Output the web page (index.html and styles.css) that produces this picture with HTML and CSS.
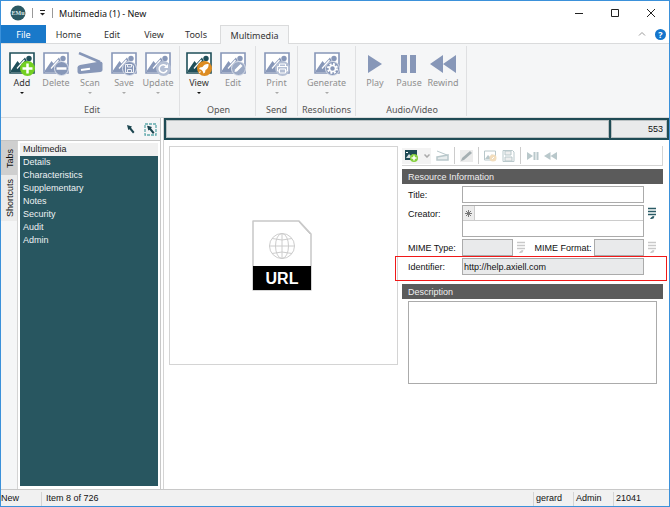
FILE: index.html
```
<!DOCTYPE html>
<html lang="en">
<head>
<meta charset="utf-8">
<title>Multimedia (1) - New</title>
<link rel="stylesheet" href="styles.css">
</head>
<body>
<svg class="defs" aria-hidden="true">
  <defs>
    <symbol id="picture" viewBox="0 0 26 24">
      <path d="M1 1h24v20H1z" fill="#fff" stroke="currentColor" stroke-width="1.600"/>
      <path d="M2 18.500 8.500 9l2 2.500L16 5.500l7 13.500V20H2z" fill="currentColor"/>
      <path d="M8 16.500 15.500 8" stroke="#fff" stroke-width="1.200"/>
      <circle cx="20" cy="6.500" r="2.700" fill="currentColor"/>
    </symbol>
    <symbol id="cursor" viewBox="0 0 8 9">
      <path d="M0 0 5 1.500 4 2.700 7.500 7 6 8.500 2.500 4.200 1.300 5z" fill="#1c4650"/>
    </symbol>
    <symbol id="lookup" viewBox="0 0 10 13">
      <path d="M1 1.500h8M1 4.500h8M1 7.500h8" stroke="currentColor" stroke-width="1.500"/>
      <path d="m3 12 1-1.500L6 9l1.500.5-1 2L4.500 12z" fill="currentColor"/>
    </symbol>
  </defs>
</svg>
<div class="window">
  <header class="titlebar">
    <svg class="logo" viewBox="0 0 16 16"><circle cx="8" cy="8" r="7.500" fill="#2b5963"/><text x="8" y="10" text-anchor="middle" class="logo-text">EMu</text></svg>
    <span class="divider"></span>
    <button class="quick" aria-label="Customize"><svg viewBox="0 0 7 6"><path d="M1 .5h5" stroke="#222"/><path d="M1 3h5L3.500 5.500z" fill="#222"/></svg></button>
    <span class="divider"></span>
    <h1>Multimedia (1) - New</h1>
    <div class="controls">
      <button aria-label="Minimize"><svg viewBox="0 0 10 10"><path d="M1 5.500h8" stroke="#222"/></svg></button>
      <button aria-label="Maximize"><svg viewBox="0 0 10 10"><path d="M1.500 1.500h7v7h-7z" fill="none" stroke="#222"/></svg></button>
      <button aria-label="Close"><svg viewBox="0 0 10 10"><path d="m1 1 8 8M9 1 1 9" stroke="#222"/></svg></button>
    </div>
  </header>
  <nav class="menu">
    <button class="file">File</button>
    <button>Home</button>
    <button>Edit</button>
    <button>View</button>
    <button>Tools</button>
    <button class="current">Multimedia</button>
    <div class="menu-end">
      <svg class="collapse" viewBox="0 0 8 8"><path d="M1 5.500 4 2.500l3 3" fill="none" stroke="#999"/></svg>
      <button class="help" aria-label="Help">?</button>
    </div>
  </nav>
  <section class="ribbon">
    <div class="group first">
      <div class="tools">
        <button class="tool dark"><svg viewBox="0 0 26 24"><use href="#picture"/><circle cx="18.500" cy="16.500" r="7.500" fill="#74d022"/><path d="M18.500 11.500v10M13.500 16.500h10" stroke="#fff" stroke-width="2.500"/></svg><span>Add</span><i class="caret"></i></button>
        <button class="tool"><svg viewBox="0 0 26 24"><use href="#picture"/><circle cx="18.500" cy="16.500" r="7" fill="#8797b8" stroke="#dde2ec"/><path d="M13.500 16.500h10" stroke="#fff" stroke-width="2.500"/></svg><span>Delete</span></button>
        <button class="tool"><svg viewBox="0 0 26 24"><path d="m2 1 21 9" stroke="currentColor" stroke-width="2.500"/><path d="M3 13 23 9.500q2.500 0 2.500 2V18q0 1.500-2 2L3 22Q.5 22 .5 20v-4.500Q.5 13.500 3 13z" fill="currentColor"/><path d="m4 18 9-1.200" stroke="#fff" stroke-width="2"/></svg><span>Scan</span><i class="caret"></i></button>
        <button class="tool"><svg viewBox="0 0 26 24"><use href="#picture"/><circle cx="18.500" cy="16.500" r="7" fill="#8797b8" stroke="#dde2ec"/><path d="M14.500 12.500h6.500l1.500 1.500v6.500h-8zM16.500 12.500V15h4v-2.500M16.500 20.500V17.500h4v3" fill="none" stroke="#eef1f6"/></svg><span>Save</span><i class="caret"></i></button>
        <button class="tool"><svg viewBox="0 0 26 24"><use href="#picture"/><circle cx="18.500" cy="16.500" r="7.500" fill="#b4bfd4"/><path d="M21.500 14.500A4 4 0 1 0 22 18" fill="none" stroke="#fff" stroke-width="1.500"/><path d="M23 12v4h-4z" fill="#fff"/></svg><span>Update</span><i class="caret"></i></button>
      </div>
      <h2>Edit</h2>
    </div>
    <div class="group second">
      <div class="tools">
        <button class="tool dark"><svg viewBox="0 0 26 24"><use href="#picture"/><circle cx="18.500" cy="16.500" r="7.500" fill="#dd8c22"/><path d="M22.500 12q-4-.5-6 3l-2.500.5-1 1.500 2.300.8 1.400 1.500.8 2.200 1.500-1 .5-2.500q3.500-2 3-6zM14 19l-1.500 2.500L15 20z" fill="#fff"/></svg><span>View</span><i class="caret"></i></button>
        <button class="tool"><svg viewBox="0 0 26 24"><use href="#picture"/><circle cx="18.500" cy="16.500" r="7" fill="#9ba9c4" stroke="#dde2ec"/><path d="m14.500 20 .5-2.500 5.500-5.500 2 2-5.500 5.500z" fill="#fff"/></svg><span>Edit</span></button>
      </div>
      <h2>Open</h2>
    </div>
    <div class="group third">
      <div class="tools">
        <button class="tool"><svg viewBox="0 0 26 24"><use href="#picture"/><circle cx="18.500" cy="16.500" r="7.500" fill="#b4bfd4"/><path d="M15.500 14.500V12h6v2.500M15.500 19h-2v-4.500h10V19h-2M15.500 17h6v4h-6z" fill="none" stroke="#fff"/></svg><span>Print</span><i class="caret"></i></button>
      </div>
      <h2>Send</h2>
    </div>
    <div class="group fourth">
      <div class="tools">
        <button class="tool"><svg viewBox="0 0 26 24"><use href="#picture"/><circle cx="18.500" cy="16.500" r="7" fill="#8797b8" stroke="#dde2ec"/><circle cx="18.500" cy="16.500" r="4.500" fill="none" stroke="#fff" stroke-width="2" stroke-dasharray="2 1.530"/><circle cx="18.500" cy="16.500" r="3" fill="none" stroke="#fff" stroke-width="1.500"/></svg><span>Generate</span><i class="caret"></i></button>
      </div>
      <h2>Resolutions</h2>
    </div>
    <div class="group fifth">
      <div class="tools">
        <button class="tool"><svg viewBox="0 0 26 24"><path d="M6 3v18l14-9z" fill="currentColor"/></svg><span>Play</span></button>
        <button class="tool"><svg viewBox="0 0 26 24"><path d="M5 3h6v18H5zM14 3h6v18h-6z" fill="currentColor"/></svg><span>Pause</span></button>
        <button class="tool"><svg viewBox="0 0 26 24"><path d="M13 3v18L0 12zM26 3v18l-13-9z" fill="currentColor"/></svg><span>Rewind</span></button>
      </div>
      <h2>Audio/Video</h2>
    </div>
  </section>
  <main class="workspace">
    <aside class="side">
      <div class="side-tools">
        <button aria-label="Select"><svg class="pointer" viewBox="0 0 8 9"><use href="#cursor"/></svg></button>
        <button aria-label="Select area"><svg class="area" viewBox="0 0 13 13"><path d="M1 1h11v11H1z" fill="none" stroke="#5fa9ac" stroke-width="1.300" stroke-dasharray="3 1"/><use href="#cursor" x="3" y="2.500" width="8" height="9"/></svg></button>
      </div>
      <div class="side-body">
        <div class="side-tabs">
          <button class="active">Tabs</button>
          <button>Shortcuts</button>
        </div>
        <nav class="tree">
          <a href="#" class="active">Multimedia</a>
          <a href="#">Details</a>
          <a href="#">Characteristics</a>
          <a href="#">Supplementary</a>
          <a href="#">Notes</a>
          <a href="#">Security</a>
          <a href="#">Audit</a>
          <a href="#">Admin</a>
        </nav>
      </div>
    </aside>
    <section class="record">
      <div class="summary">
        <input aria-label="Record summary" readonly>
        <input class="number" aria-label="Record number" value="553" readonly>
      </div>
      <div class="content">
        <figure class="preview">
          <svg viewBox="0 0 62 72">
            <path d="M2 1h46l12 13v56H2z" fill="#fff" stroke="#c8c8c8" stroke-width="1.500" stroke-linejoin="round"/>
            <path d="M48 1v1l11 12" fill="none" stroke="#c8c8c8"/>
            <g fill="none" stroke="#ccc"><circle cx="31" cy="26" r="12.500"/><ellipse cx="31" cy="26" rx="6.500" ry="12.500"/><path d="M31 13.500v25M18.500 26h25M21 18.500q10 3 20 0M21 33.500q10-3 20 0"/></g>
            <path d="M2 46h58v24H2z"/>
            <text x="31" y="64" text-anchor="middle" class="url">URL</text>
          </svg>
        </figure>
        <form class="details">
          <div class="bar">
            <button type="button" class="add" aria-label="Add media"><svg viewBox="0 0 13 12"><path d="M0 0h12v10H0z" fill="#1f4b55"/><path d="m1 8 3-4 2 2 2-2 2 4z" fill="#d5e0e2"/><path d="M1 2h2v1H1z" fill="#fff"/><circle cx="9" cy="8" r="4" fill="#84cf3c"/><path d="M9 5.500v5M6.500 8h5" stroke="#fff" stroke-width="1.500"/></svg><svg class="down" viewBox="0 0 6 4"><path d="m.5.500 2.500 2.500L5.500.500" fill="none" stroke="#aaa" stroke-width="1.500"/></svg></button>
            <button type="button" aria-label="Scan"><svg viewBox="0 0 13 12"><path d="m1 1 10 4" stroke="currentColor"/><path d="m1 7 11-2v5H1z" fill="#e8edee" stroke="currentColor" stroke-width="1.500"/></svg></button>
            <span class="rule"></span>
            <button type="button" class="edit" aria-label="Edit"><svg viewBox="0 0 13 12"><path d="m1 11 1-3 8-7 2 2-8 7z" fill="currentColor"/></svg></button>
            <span class="rule"></span>
            <button type="button" aria-label="View"><svg viewBox="0 0 13 12"><path d="M.5 1h11v9H.5z" fill="#fff" stroke="currentColor"/><path d="m1 9 3-4 2 2 2-3 3 5z" fill="currentColor"/><circle cx="9" cy="8" r="3.500" fill="#f2ddbd"/><path d="m8 9 2-2" stroke="#fff"/></svg></button>
            <button type="button" aria-label="Save"><svg viewBox="0 0 13 12"><path d="M1 .5h9.500L12 2v9.500H1z" fill="#fff" stroke="currentColor"/><path d="M3 1h6v4H3zM3 7h7v4H3z" fill="#eee" stroke="currentColor"/></svg></button>
            <span class="rule"></span>
            <button type="button" aria-label="Play or pause"><svg viewBox="0 0 13 12"><path d="M1 2v8l6-4zM7.500 2h2v8h-2zM10.500 2h2v8h-2z" fill="currentColor"/></svg></button>
            <button type="button" aria-label="Rewind"><svg viewBox="0 0 13 12"><path d="M6.500 2v8L0 6zM13 2v8L6.500 6z" fill="currentColor"/></svg></button>
          </div>
          <h3>Resource Information</h3>
          <div class="row">
            <label for="title">Title:</label>
            <input id="title">
          </div>
          <div class="row creator">
            <label for="creator">Creator:</label>
            <div class="list">
              <div class="line"><span class="star"><svg viewBox="0 0 9 9"><path d="M4.500 1v7M1 4.500h7M2 2l5 5M7 2 2 7" stroke="#777"/></svg></span><input id="creator"></div>
              <input aria-label="Creator 2">
            </div>
            <button type="button" class="lookup on" aria-label="Look up creator"><svg viewBox="0 0 10 13"><use href="#lookup"/></svg></button>
          </div>
          <div class="row mime">
            <label for="type">MIME Type:</label>
            <input id="type" readonly>
            <button type="button" class="lookup" aria-label="Look up type"><svg viewBox="0 0 10 13"><use href="#lookup"/></svg></button>
            <label for="format">MIME Format:</label>
            <input id="format" readonly>
            <button type="button" class="lookup" aria-label="Look up format"><svg viewBox="0 0 10 13"><use href="#lookup"/></svg></button>
          </div>
          <div class="row identifier">
            <label for="identifier">Identifier:</label>
            <input id="identifier" value="http://help.axiell.com" readonly>
          </div>
          <h3>Description</h3>
          <textarea aria-label="Description"></textarea>
        </form>
      </div>
    </section>
  </main>
  <footer class="status">
    <span class="mode">New</span>
    <span class="position">Item 8 of 726</span>
    <span>gerard</span>
    <span>Admin</span>
    <span class="port">21041</span>
  </footer>
</div>
</body>
</html>
```

FILE: styles.css
```
* {
  box-sizing: border-box;
}

body {
  margin: 0;
  font: 9px/13px "Liberation Sans", Arial, sans-serif;
  color: #111;
}

.titlebar,
.menu,
.ribbon {
  font-family: "Noto Sans", "Open Sans", sans-serif;
}

button, input, textarea {
  font: inherit;
  color: inherit;
  border: 0;
  border-radius: 0;
  margin: 0;
  padding: 0;
  background: none;
}

svg {
  display: block;
}

h1, h2, h3, figure {
  margin: 0;
  font: inherit;
}

.defs {
  position: absolute;
  width: 0;
  height: 0;
}

.window {
  display: flex;
  flex-direction: column;
  min-height: 100vh;
  border: 1px solid #3b91da;
  background: #fff;
}

.titlebar {
  display: flex;
  align-items: center;
  height: 24px;
  padding-left: 9px;
}

.logo {
  width: 16px;
  height: 16px;
}

.logo-text {
  font: bold 6px "Liberation Serif", serif;
  fill: #dce8ea;
}

.titlebar .divider {
  width: 1px;
  height: 10px;
  margin: 0 6px;
  background: #999;
}

.quick svg {
  width: 7px;
  height: 6px;
}

.controls {
  display: flex;
  margin-left: auto;
}

.controls button {
  width: 36px;
  padding-left: 13px;
}

.controls svg {
  width: 10px;
  height: 10px;
}

.menu {
  display: flex;
  height: 19px;
  border-bottom: 1px solid #dadbdc;
}

.menu > button {
  width: 42px;
  color: #333;
}

.menu > .file {
  width: 45px;
  background: #1979ca;
  color: #fff;
}

.menu > .file + button {
  width: 45px;
}

.menu > .current {
  width: 69px;
  margin-left: 3px;
  height: 19px;
  border: 1px solid #dadbdc;
  border-bottom: 0;
  background: #f5f6f7;
}

.menu-end {
  display: flex;
  align-items: center;
  gap: 9px;
  margin-left: auto;
  padding-right: 3px;
}

.collapse {
  width: 8px;
  height: 8px;
}

.menu .help {
  width: 11px;
  height: 11px;
  border-radius: 50%;
  background: #1475cc;
  color: #fff;
  font-weight: bold;
  line-height: 11px;
}

.ribbon {
  display: flex;
  height: 74px;
  padding: 2px 0 1px 4px;
  background: #f5f6f7;
  border-bottom: 1px solid #dadbdc;
}

.group {
  display: flex;
  flex-direction: column;
  justify-content: space-between;
  border-right: 1px solid #dfe0e2;
}

.group h2 {
  text-align: center;
  color: #555;
}

.first {
  width: 175px;
}

.second {
  width: 76px;
  padding-left: 2px;
}

.third {
  width: 42px;
}

.fourth {
  width: 58px;
}

.fifth {
  width: 111px;
  padding-left: 2px;
}

.tools {
  display: flex;
}

.third .tools,
.fourth .tools {
  justify-content: center;
}

.tool {
  display: flex;
  flex-direction: column;
  align-items: center;
  width: 34px;
  padding-top: 6px;
  color: #8797b8;
}

.tool.dark {
  color: #1f4f59;
}

.tool svg {
  width: 26px;
  height: 24px;
}

.tool span {
  color: #8f8f8f;
}

.tool.dark span {
  color: #333;
}

.caret {
  margin-top: 3px;
  border: 2px solid transparent;
  border-top-color: #aaa;
  border-bottom: 0;
}

.dark .caret {
  border-top-color: #111;
}

.workspace {
  display: flex;
  flex: 1;
}

.side {
  display: flex;
  flex: 0 0 160px;
  flex-direction: column;
  border-right: 1px solid #c8c8c8;
}

.side-tools {
  display: flex;
  justify-content: flex-end;
  align-items: center;
  gap: 9px;
  height: 23px;
  padding-right: 3px;
  background: #f5f6f7;
  border-bottom: 1px solid #c4c4c4;
}

.pointer {
  width: 8px;
  height: 9px;
}

.area {
  width: 13px;
  height: 13px;
}

.side-body {
  display: flex;
  flex: 1;
}

.side-tabs {
  display: flex;
  flex-direction: column;
  width: 17px;
  background: #f5f6f7;
  border-right: 1px solid #d4d4d4;
}

.side-tabs button {
  height: 46px;
  width: 16px;
  padding-right: 3px;
  background: #ebebeb;
  writing-mode: vertical-rl;
  transform: rotate(180deg);
}

.side-tabs .active {
  height: 34px;
  background: #cfcfcf;
}

.tree {
  display: flex;
  flex: 1;
  flex-direction: column;
  margin: 2px 2px 3px;
  background: #285660;
}

.tree a {
  padding-left: 3px;
  color: #eef3f4;
  text-decoration: none;
}

.tree .active {
  background: #f0f0f0;
  color: #222;
}

.record {
  display: flex;
  flex: 1;
  flex-direction: column;
  min-width: 0;
  margin-left: 2px;
  border-left: 1px solid #d4d4d4;
}

.summary {
  display: flex;
  gap: 2px;
  padding: 2px;
  height: 22px;
  background: #1f4b55;
}

.summary input {
  flex: 1;
  min-width: 0;
  padding: 0 3px;
  background: #e9eaeb;
  border: 1px solid #b9c0c2;
}

.summary .number {
  flex: 0 0 56px;
  text-align: right;
}

.content {
  display: grid;
  grid-template-columns: 229px minmax(0, 1fr);
  align-items: start;
  gap: 4px;
  padding: 6px 6px 0 5px;
}

.preview {
  display: flex;
  align-items: center;
  justify-content: center;
  height: 219px;
  padding-right: 4px;
  border: 1px solid #d4d4d4;
}

.preview svg {
  width: 62px;
  height: 72px;
}

.url {
  font: bold 16px "Liberation Sans", sans-serif;
  fill: #fff;
}

.details {
  display: flex;
  flex-direction: column;
}

.bar {
  display: flex;
  align-items: center;
  gap: 5px;
  height: 20px;
  margin-bottom: 3px;
  color: #b9c8cb;
  border-right: 1px solid #d4d4d4;
  border-bottom: 1px solid #d4d4d4;
}

.bar svg {
  width: 13px;
  height: 12px;
}

.bar .add {
  display: flex;
  align-items: center;
  gap: 6px;
  padding: 2px 1px 2px 3px;
  background: #f3f3f3;
}

.bar .down {
  width: 6px;
  height: 4px;
}

.bar .edit {
  background: #ececec;
  color: #a5afb2;
}

.bar .rule {
  width: 1px;
  height: 17px;
  background: #ccc;
}

.details h3 {
  height: 15px;
  padding: 2px 6px 0;
  background: #5b5b5b;
  color: #f0f0f0;
}

.row {
  display: flex;
  margin-top: 2px;
  padding: 0 19px 0 6px;
}

.row label {
  flex: 0 0 54px;
  height: 17px;
  line-height: 19px;
  white-space: nowrap;
}

.row > input,
.list,
.details textarea {
  flex: 1;
  min-width: 0;
  height: 17px;
  padding: 0 1px;
  border: 1px solid #ababab;
}

.row input[readonly] {
  background: #e9eaeb;
}

.details .list {
  height: 32px;
  padding: 0;
}

.list .line {
  display: flex;
  height: 15px;
  border-bottom: 1px solid #ccc;
}

.list input {
  width: 100%;
  height: 14px;
}

.star {
  padding: 3px 1px 0;
  background: #ececec;
  border-right: 1px solid #ccc;
}

.star svg {
  width: 9px;
  height: 9px;
}

.row .lookup {
  align-self: flex-start;
  width: 10px;
  padding-top: 2px;
  color: #c9c9c9;
}

.row .on {
  color: #2b5b66;
}

.lookup svg {
  width: 10px;
  height: 13px;
}

.creator,
.mime {
  padding-right: 6px;
}

.creator .lookup,
.mime .lookup {
  margin-left: 3px;
}

.mime label + input {
  flex: 1 1 48px;
}

.mime .lookup + label {
  flex: 0 0 59px;
  margin-left: 9px;
}

.identifier {
  margin: 0 -4px 3px -7px;
  padding: 1px 22px 5px 12px;
  border: 1px solid #f01818;
}

.details textarea {
  flex: none;
  height: 83px;
  margin: 2px 6px 0;
  resize: none;
}

.status {
  display: flex;
  height: 17px;
  padding-top: 2px;
  background: #f1f1f1;
  border-top: 1px solid #c8c8c8;
}

.status span {
  width: 40px;
  padding-left: 2px;
  border-left: 1px solid #d4d4d4;
}

.status .mode {
  padding-left: 0;
  border-left: 0;
}

.status .position {
  flex: 1;
  padding-left: 4px;
}

.status .port {
  width: 56px;
}
```
